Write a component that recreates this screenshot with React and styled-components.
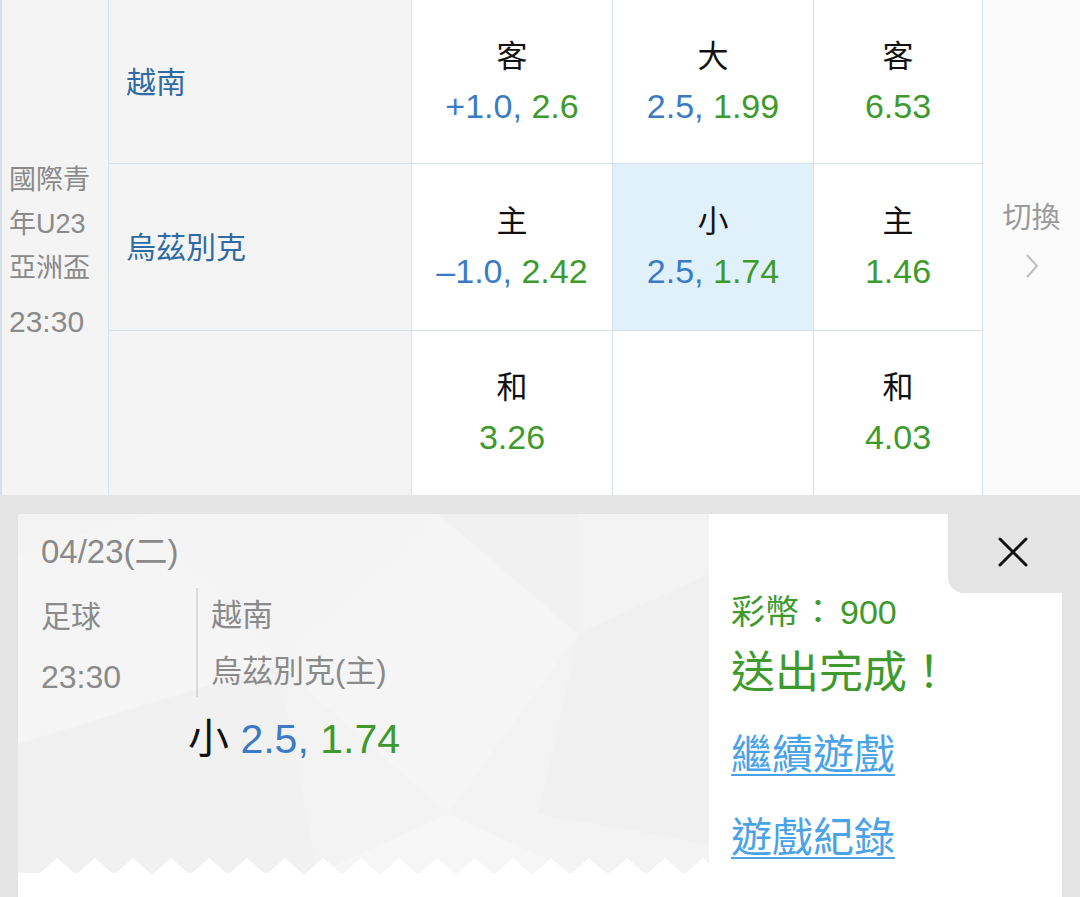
import styled, { createGlobalStyle } from "styled-components";

const GlobalStyle = createGlobalStyle`
  html, body {
    margin: 0;
    padding: 0;
    background: #e4e4e4;
  }
  body {
    font-family: "Liberation Sans", "Noto Sans CJK TC", sans-serif;
  }
  * {
    box-sizing: border-box;
  }
`;

const BLUE = "#3b7bc6";
const GREEN = "#3e9a2d";
const LINE = "#d5e0eb";

const Page = styled.div`
  width: 1080px;
  height: 897px;
  overflow: hidden;
  display: flex;
  flex-direction: column;
`;

const Board = styled.div`
  display: grid;
  grid-template-columns: 109px 303px 201px 201px 169px 97px;
  grid-template-rows: 164px 167px 164px;
  background: #ffffff;
`;

const LeagueCell = styled.div`
  grid-row: span 3;
  background: #f4f4f4;
  border-left: 2px solid ${LINE};
  border-right: 1px solid ${LINE};
  display: flex;
  flex-direction: column;
  justify-content: center;
  padding: 6px 0 0 7px;
  color: #8a8a8a;
  font-size: 27px;
  line-height: 44px;
`;

const LeagueTime = styled.div`
  margin-top: 10px;
  font-size: 30px;
`;

const TeamCell = styled.div`
  background: #f4f4f4;
  border-right: 1px solid ${LINE};
  border-bottom: ${(p) => (p.$last ? "none" : `1px solid ${LINE}`)};
  display: flex;
  align-items: center;
  padding: 0 0 4px 17px;
  color: #2f6aa3;
  font-size: 30px;
`;

const OddsCell = styled.div`
  background: ${(p) => (p.$active ? "#e1f1fb" : "#ffffff")};
  border-right: 1px solid ${LINE};
  border-bottom: ${(p) => (p.$last ? "none" : `1px solid ${LINE}`)};
  display: flex;
  flex-direction: column;
  align-items: center;
  justify-content: center;
`;

const OddsLabel = styled.div`
  font-size: 31px;
  line-height: 48px;
  color: #111111;
`;

const OddsValue = styled.div`
  font-size: 34px;
  line-height: 50px;
  white-space: nowrap;
`;

const Blue = styled.span`
  color: ${BLUE};
`;

const Green = styled.span`
  color: ${GREEN};
`;

const SwitchCell = styled.div`
  grid-column: 6;
  grid-row: 1 / span 3;
  background: #fbfbfb;
  display: flex;
  flex-direction: column;
  align-items: center;
  justify-content: center;
  padding-bottom: 18px;
  color: #9a9a9a;
  font-size: 29px;
  line-height: 40px;
`;

const Chevron = styled.svg`
  margin-top: 15px;
`;

const Overlay = styled.div`
  flex: 1;
  background: #e4e4e4;
  padding: 19px 18px 0 18px;
  display: flex;
`;

const Panel = styled.div`
  flex: 1;
  display: grid;
  grid-template-columns: 691px 1fr;
`;

const Ticket = styled.div`
  display: flex;
  flex-direction: column;
  background: #ffffff;
`;

const TicketBody = styled.div`
  position: relative;
  height: 359px;
  background: #f3f3f3;
  overflow: hidden;
  padding: 19px 0 0 23px;
`;

const Texture = styled.svg`
  position: absolute;
  inset: 0;
  width: 100%;
  height: 100%;
  pointer-events: none;
`;

const Zigzag = styled.svg`
  position: absolute;
  left: 0;
  bottom: 0;
`;

const TicketContent = styled.div`
  position: relative;
  color: #8a8a8a;
`;

const DateLine = styled.div`
  font-size: 33px;
  line-height: 38px;
`;

const InfoRow = styled.div`
  display: flex;
  margin-top: 17px;
  height: 109px;
`;

const SportCol = styled.div`
  width: 155px;
  font-size: 30px;
  line-height: 60px;
  margin-top: -1px;
`;

const SportTime = styled.div`
  font-size: 32px;
`;

const TeamsCol = styled.div`
  border-left: 2px solid #d9d9d9;
  padding-left: 13px;
  font-size: 31px;
  line-height: 56px;
`;

const BetLine = styled.div`
  margin: 16px 0 0 147px;
  font-size: 41px;
  line-height: 52px;
  color: #111111;
`;

const Result = styled.div`
  position: relative;
  background: #ffffff;
  padding: 76px 0 0 22px;
`;

const CloseButton = styled.button`
  position: absolute;
  top: 0;
  right: 0;
  width: 114px;
  height: 79px;
  border: none;
  background: #e4e4e4;
  border-bottom-left-radius: 16px;
  display: flex;
  align-items: center;
  justify-content: center;
  padding: 0 0 4px 16px;
  cursor: pointer;
`;

const Coins = styled.div`
  font-size: 34px;
  line-height: 44px;
  color: ${GREEN};
`;

const Colon = styled.span`
  margin: 0 5px 0 2px;
`;

const Done = styled.div`
  margin-top: 9px;
  font-size: 44px;
  line-height: 60px;
  color: ${GREEN};
`;

const LinkText = styled.a`
  display: block;
  width: max-content;
  margin-top: ${(p) => p.$gap}px;
  font-size: 41px;
  line-height: 52px;
  color: #4aa3e8;
  text-decoration: underline;
  text-underline-offset: 5px;
  text-decoration-thickness: 2px;
  cursor: pointer;
`;

const Odds = ({ line, price }) => (
  <OddsValue>
    {line && <Blue>{line}, </Blue>}
    <Green>{price}</Green>
  </OddsValue>
);

const rows = [
  {
    team: "越南",
    cells: [
      { label: "客", line: "+1.0", price: "2.6" },
      { label: "大", line: "2.5", price: "1.99" },
      { label: "客", price: "6.53" },
    ],
  },
  {
    team: "烏茲別克",
    cells: [
      { label: "主", line: "–1.0", price: "2.42" },
      { label: "小", line: "2.5", price: "1.74", active: true },
      { label: "主", price: "1.46" },
    ],
  },
  {
    team: "",
    cells: [{ label: "和", price: "3.26" }, null, { label: "和", price: "4.03" }],
  },
];

const zigzagPath = () => {
  let d = "";
  for (let k = 0; k < 19; k++) {
    const px = 39 + 38 * k;
    d += `M${px - 17} 15 L${px} 0 L${px + 17} 15 Z `;
  }
  return d;
};

const App = () => {
  return (
    <Page>
      <GlobalStyle />
      <Board>
        <LeagueCell>
          <div>國際青</div>
          <div>年U23</div>
          <div>亞洲盃</div>
          <LeagueTime>23:30</LeagueTime>
        </LeagueCell>
        {rows.map((row, r) => {
          const last = r === rows.length - 1;
          return [
            <TeamCell key={`t${r}`} $last={last}>
              {row.team}
            </TeamCell>,
            ...row.cells.map((c, i) => (
              <OddsCell key={`c${r}${i}`} $last={last} $active={c && c.active}>
                {c && (
                  <>
                    <OddsLabel>{c.label}</OddsLabel>
                    <Odds line={c.line} price={c.price} />
                  </>
                )}
              </OddsCell>
            )),
            r === 0 ? (
              <SwitchCell key="switch">
                <div>切換</div>
                <Chevron width="14" height="26" viewBox="0 0 14 26">
                  <path d="M2 2 L12 13 L2 24" fill="none" stroke="#bdbdbd" strokeWidth="2" />
                </Chevron>
              </SwitchCell>
            ) : null,
          ];
        })}
      </Board>

      <Overlay>
        <Panel>
          <Ticket>
            <TicketBody>
              <Texture viewBox="0 0 691 359" preserveAspectRatio="none">
                <polygon points="0,40 130,0 260,150 0,230" fill="#ffffff" opacity="0.2" />
                <polygon points="260,150 420,0 560,120 430,300" fill="#ffffff" opacity="0.18" />
                <polygon points="560,120 691,60 691,330 520,300" fill="#ececec" opacity="0.3" />
                <polygon points="0,230 260,150 300,359 0,359" fill="#efefef" opacity="0.3" />
                <polygon points="300,359 430,300 560,359" fill="#ffffff" opacity="0.25" />
                <polygon points="420,0 560,0 560,120" fill="#eeeeee" opacity="0.3" />
                <polygon points="130,0 420,0 260,150" fill="#f7f7f7" opacity="0.35" />
              </Texture>
              <TicketContent>
                <DateLine>04/23(二)</DateLine>
                <InfoRow>
                  <SportCol>
                    <div>足球</div>
                    <SportTime>23:30</SportTime>
                  </SportCol>
                  <TeamsCol>
                    <div>越南</div>
                    <div>烏茲別克(主)</div>
                  </TeamsCol>
                </InfoRow>
                <BetLine>
                  小 <Blue>2.5, </Blue>
                  <Green>1.74</Green>
                </BetLine>
              </TicketContent>
              <Zigzag width="691" height="15" viewBox="0 0 691 15">
                <path d={zigzagPath()} fill="#ffffff" />
              </Zigzag>
            </TicketBody>
          </Ticket>

          <Result>
            <CloseButton aria-label="close">
              <svg width="30" height="30" viewBox="0 0 30 30">
                <path d="M2 2 L28 28 M28 2 L2 28" stroke="#111" strokeWidth="3" strokeLinecap="round" />
              </svg>
            </CloseButton>
            <Coins>
              彩幣<Colon>：</Colon>900
            </Coins>
            <Done>送出完成！</Done>
            <LinkText $gap={26}>繼續遊戲</LinkText>
            <LinkText $gap={31}>遊戲紀錄</LinkText>
          </Result>
        </Panel>
      </Overlay>
    </Page>
  );
};

export default App;
